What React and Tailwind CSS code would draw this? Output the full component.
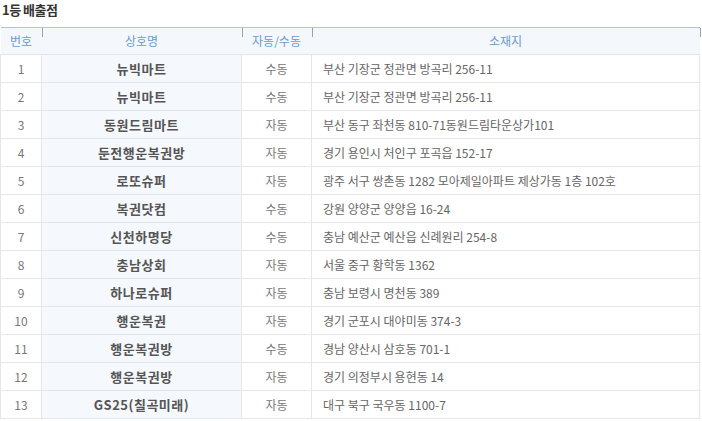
import React from "react";

const rows = [
  ["1", "뉴빅마트", "수동", "부산 기장군 정관면 방곡리 256-11"],
  ["2", "뉴빅마트", "수동", "부산 기장군 정관면 방곡리 256-11"],
  ["3", "동원드림마트", "자동", "부산 동구 좌천동 810-71동원드림타운상가101"],
  ["4", "둔전행운복권방", "자동", "경기 용인시 처인구 포곡읍 152-17"],
  ["5", "로또슈퍼", "자동", "광주 서구 쌍촌동 1282 모아제일아파트 제상가동 1층 102호"],
  ["6", "복권닷컴", "수동", "강원 양양군 양양읍 16-24"],
  ["7", "신천하명당", "수동", "충남 예산군 예산읍 신례원리 254-8"],
  ["8", "충남상회", "자동", "서울 중구 황학동 1362"],
  ["9", "하나로슈퍼", "자동", "충남 보령시 명천동 389"],
  ["10", "행운복권", "자동", "경기 군포시 대야미동 374-3"],
  ["11", "행운복권방", "수동", "경남 양산시 삼호동 701-1"],
  ["12", "행운복권방", "자동", "경기 의정부시 용현동 14"],
  ["13", "GS25(칠곡미래)", "자동", "대구 북구 국우동 1100-7"],
];

function Tick() {
  return <span className="absolute right-[-1px] top-0 h-[9px] w-px bg-[#9aa3ad]" />;
}

export default function App() {
  return (
    <div className="w-[702px] h-[421px] bg-white overflow-hidden" style={{ fontFamily: '"Noto Sans CJK KR", "Noto Sans", sans-serif' }}>
      <div className="h-[27px] pl-[2px] pt-[1px] text-[13px] font-bold text-[#333] leading-[18px] tracking-[-0.5px]">1등 배출점</div>
      <table className="w-[700px] border-collapse table-fixed">
        <colgroup>
          <col className="w-[41px]" />
          <col className="w-[200px]" />
          <col className="w-[70px]" />
          <col />
        </colgroup>
        <thead>
          <tr className="h-[27px] bg-[#f4f8fd] border-t border-t-[#b3c4d8] border-b border-b-[#dfe6ee]">
            <th className="relative p-0 text-[12px] font-normal text-[#6a9acd] text-center">번호<Tick /></th>
            <th className="relative p-0 text-[12px] font-normal text-[#6a9acd] text-center">상호명<Tick /></th>
            <th className="relative p-0 text-[12px] font-normal text-[#6a9acd] text-center">자동/수동<Tick /></th>
            <th className="relative p-0 text-[12px] font-normal text-[#6a9acd] text-center">소재지<Tick /></th>
          </tr>
        </thead>
        <tbody>
          {rows.map((r) => (
            <tr key={r[0]} className="h-[28px] border-b border-[#e6e6e6]">
              <td className="p-0 border-l border-r border-[#e6e6e6] text-center text-[12px] text-[#777]">{r[0]}</td>
              <td className="p-0 border-r border-[#e6e6e6] bg-[#f5f8fd] text-center text-[13px] font-bold text-[#555] tracking-[0.5px]">{r[1]}</td>
              <td className="p-0 border-r border-[#e6e6e6] text-center text-[12px] text-[#777]">{r[2]}</td>
              <td className="p-0 pl-[11px] border-r border-[#e6e6e6] text-left text-[12px] text-[#666] whitespace-nowrap">{r[3]}</td>
            </tr>
          ))}
        </tbody>
      </table>
    </div>
  );
}
